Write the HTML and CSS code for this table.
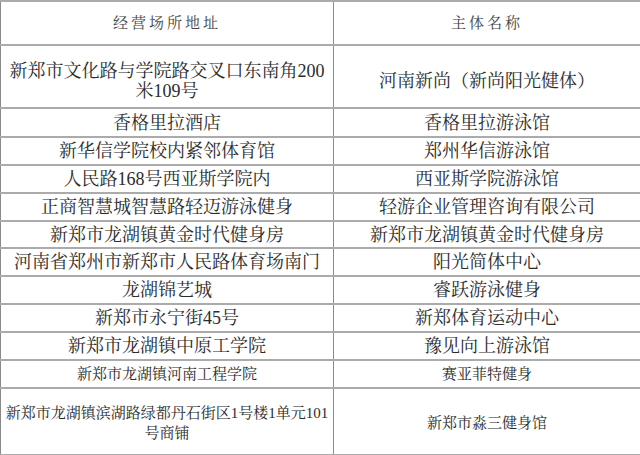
FILE: index.html
```html
<!DOCTYPE html>
<html lang="zh-CN">
<head>
<meta charset="utf-8">
<link rel="stylesheet" href="styles.css">
</head>
<body>
<table class="venues">
  <colgroup><col class="col-addr"><col class="col-name"></colgroup>
  <thead>
    <tr class="r-head"><th>经营场所地址</th><th>主体名称</th></tr>
  </thead>
  <tbody>
    <tr class="r-tall"><td class="wrap">新郑市文化路与学院路交叉口东南角200<br>米109号</td><td>河南新尚（新尚阳光健体）</td></tr>
    <tr class="r29"><td>香格里拉酒店</td><td>香格里拉游泳馆</td></tr>
    <tr class="r28"><td>新华信学院校内紧邻体育馆</td><td>郑州华信游泳馆</td></tr>
    <tr class="r28"><td>人民路168号西亚斯学院内</td><td>西亚斯学院游泳馆</td></tr>
    <tr class="r28"><td>正商智慧城智慧路轻迈游泳健身</td><td>轻游企业管理咨询有限公司</td></tr>
    <tr class="r27"><td>新郑市龙湖镇黄金时代健身房</td><td>新郑市龙湖镇黄金时代健身房</td></tr>
    <tr class="r28"><td>河南省郑州市新郑市人民路体育场南门</td><td>阳光简体中心</td></tr>
    <tr class="r28"><td>龙湖锦艺城</td><td>睿跃游泳健身</td></tr>
    <tr class="r28"><td>新郑市永宁街45号</td><td>新郑体育运动中心</td></tr>
    <tr class="r28"><td>新郑市龙湖镇中原工学院</td><td>豫见向上游泳馆</td></tr>
    <tr class="r28 small"><td>新郑市龙湖镇河南工程学院</td><td>赛亚菲特健身</td></tr>
    <tr class="r-last small"><td class="wrap">新郑市龙湖镇滨湖路绿都丹石街区1号楼1单元101<br>号商铺</td><td>新郑市淼三健身馆</td></tr>
  </tbody>
</table>
</body>
</html>
```
FILE: styles.css
```css
html, body {
  margin: 0;
  padding: 0;
  background: #ffffff;
}

.venues {
  width: 640px;
  border-collapse: collapse;
  table-layout: fixed;
  font-family: "Liberation Serif", "Noto Serif CJK SC", "Noto Sans CJK SC", serif;
  color: #2b2b2b;
}

.col-addr { width: 333px; }
.col-name { width: 307px; }

.venues th,
.venues td {
  padding: 0;
  text-align: center;
  vertical-align: middle;
  border-left: 1px solid #8a8a8a;
  border-right: 1px solid #8a8a8a;
  border-top: 2px solid #ababab;
  border-bottom: 2px solid #ababab;
  font-size: 18px;
  line-height: 20px;
  white-space: nowrap;
}

.venues th {
  font-weight: normal;
  font-size: 15px;
  letter-spacing: 3px;
  color: #444444;
}

.r-head { height: 44px; }
.r-tall { height: 63px; }
.r29 { height: 29px; }
.r28 { height: 28px; }
.r27 { height: 27px; }
.r-last { height: 67px; }

.r-tall td { padding-top: 8px; }
.r-last td { padding-top: 2px; }

.small td { font-size: 15px; }
```
